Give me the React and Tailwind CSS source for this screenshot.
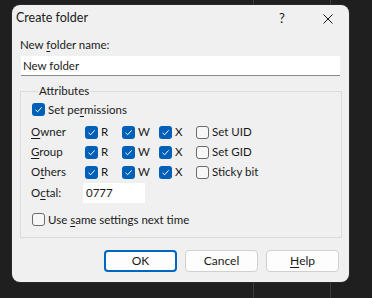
import React from 'react'

const font = { fontFamily: 'Lato, "Noto Sans", sans-serif' }

function Check({ checked }) {
  if (checked) {
    return (
      <span className="flex h-[13px] w-[13px] shrink-0 items-center justify-center rounded-[3px] bg-[#005fb8]">
        <svg width="9" height="9" viewBox="0 0 9 9">
          <path d="M1.5 4.8 L3.6 6.8 L7.6 2.4" fill="none" stroke="#ffffff" strokeWidth="1" />
        </svg>
      </span>
    )
  }
  return <span className="block h-[13px] w-[13px] shrink-0 rounded-[3px] border border-[#6b6b6b] bg-[#f7f7f7]" />
}

function CheckLabel({ checked, children }) {
  return (
    <div className="flex items-center gap-[3px]">
      <Check checked={checked} />
      <span className="leading-none">{children}</span>
    </div>
  )
}

function Key({ children }) {
  return <span className="underline underline-offset-2">{children}</span>
}

function PermRow({ label, extra }) {
  return (
    <div className="grid h-5 grid-cols-[54px_37px_37px_37px_auto] items-center">
      <span>{label}</span>
      <CheckLabel checked>R</CheckLabel>
      <CheckLabel checked>W</CheckLabel>
      <CheckLabel checked>X</CheckLabel>
      <CheckLabel>{extra}</CheckLabel>
    </div>
  )
}

function Button({ primary, children }) {
  return (
    <button
      className={
        'flex h-[22px] w-[73px] items-center justify-center rounded-[4px] bg-[#fdfdfd] text-[12px] text-[#1a1a1a] ' +
        (primary ? 'border-2 border-[#0067c0]' : 'border border-[#d0d0d0]')
      }
    >
      {children}
    </button>
  )
}

export default function App() {
  return (
    <div className="relative h-[298px] w-[372px] overflow-hidden bg-[#1f1f1f] text-[11.5px] text-[#1a1a1a]" style={font}>
      {/* window edges behind the dialog */}
      <div className="absolute left-[253px] top-0 h-full w-px bg-[#3c3c3c]" />
      <div className="absolute left-[330px] top-0 h-full w-px bg-[#3c3c3c]" />

      <div className="relative ml-[12px] mt-[5px] h-[277px] w-[337px] rounded-[8px] bg-[#f0f0f0] shadow-[0_0_0_1px_#2a2a2a]">
        {/* title bar */}
        <div className="flex h-[27px] items-center pl-[4px]">
          <span className="flex-1 text-[12.5px]">Create folder</span>
          <span className="w-[10px] text-[13px]">?</span>
          <span className="ml-[34px] mr-[16px] flex h-[10px] w-[10px]">
            <svg width="10" height="10" viewBox="0 0 10 10">
              <path d="M0.5 0.5 L9.5 9.5 M9.5 0.5 L0.5 9.5" stroke="#1a1a1a" strokeWidth="1" />
            </svg>
          </span>
        </div>

        <div className="px-[8px]">
          <div className="mt-[5px] leading-4">
            New <Key>f</Key>older name:
          </div>
          <div className="ml-px mt-[3px] flex h-[20px] w-[319px] items-center border-b border-[#8a8a8a] bg-white pl-[2px]">
            New folder
          </div>

          <fieldset className="mt-[7px] h-[155px] w-[322px] border border-[#dcdcdc] px-[10px]">
            <legend className="ml-[7px] px-px leading-4">Attributes</legend>
            <div className="ml-px mt-[4px]">
              <CheckLabel checked>
                Set pe<Key>r</Key>missions
              </CheckLabel>
            </div>
            <div className="mt-[6px] flex flex-col">
              <PermRow label={<><Key>O</Key>wner</>} extra="Set UID" />
              <PermRow label={<><Key>G</Key>roup</>} extra="Set GID" />
              <PermRow label={<>O<Key>t</Key>hers</>} extra="Sticky bit" />
            </div>
            <div className="mt-px flex items-center">
              <span className="w-[52px]">
                O<Key>c</Key>tal:
              </span>
              <div className="flex h-[20px] w-[62px] items-center bg-white pl-[3px]">0777</div>
            </div>
            <div className="ml-px mt-[10px]">
              <CheckLabel>
                Use <Key>s</Key>ame settings next time
              </CheckLabel>
            </div>
          </fieldset>
        </div>

        <div className="mt-[12px] flex gap-[8px] pl-[92px]">
          <Button primary>OK</Button>
          <Button>Cancel</Button>
          <Button>
            <Key>H</Key>elp
          </Button>
        </div>
      </div>
    </div>
  )
}
